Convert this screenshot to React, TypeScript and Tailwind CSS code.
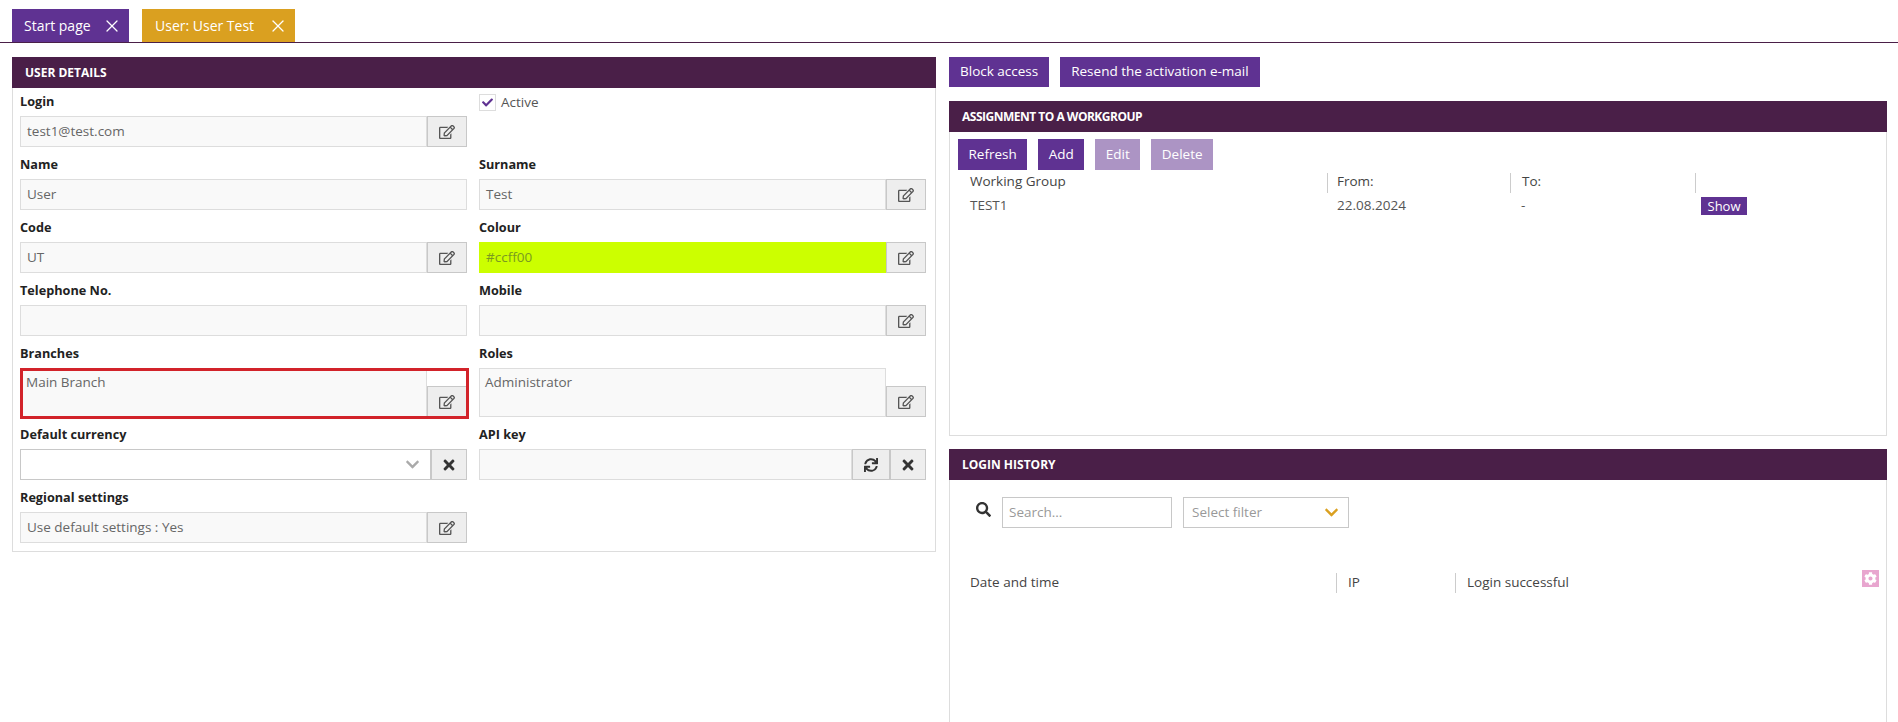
import { FaCheck, FaChevronDown, FaCog, FaRegEdit, FaSearch, FaSync, FaTimes } from "react-icons/fa";
import { X } from "lucide-react";
import type { ReactNode } from "react";

const iconButton =
  "flex shrink-0 items-center justify-center border border-[#c8c8c8] bg-[#eeeeee] text-[#555555]";
const readonlyInput = "flex min-w-0 flex-1 border border-[#dddddd] bg-[#f9f9f9] text-[#666666]";

const PanelHeader = ({ title, tight }: { title: string; tight?: boolean }) => (
  <div
    className={`flex h-[31px] items-center bg-[#4a1f48] pl-[13px] text-[12px] font-bold uppercase text-white ${
      tight ? "tracking-[-0.5px]" : ""
    }`}
  >
    {title}
  </div>
);

const EditButton = () => (
  <button className={`${iconButton} h-[31px] w-[40px]`}>
    <FaRegEdit size={16} />
  </button>
);

const Field = ({ label, children }: { label: string; children: ReactNode }) => (
  <div>
    <div className="flex h-[28px] items-center text-[12.7px] font-bold text-[#222222]">{label}</div>
    <div className="mb-[4px] flex">{children}</div>
  </div>
);

const TextField = ({ label, value, edit = true }: { label: string; value: string; edit?: boolean }) => (
  <Field label={label}>
    <div className={`${readonlyInput} h-[31px] items-center px-[6px] pb-[1px]`}>{value}</div>
    {edit && <EditButton />}
  </Field>
);

const ActionButton = ({
  children,
  disabled,
  size = "h-[31px] px-[10.5px]",
}: {
  children: ReactNode;
  disabled?: boolean;
  size?: string;
}) => (
  <button className={`${size} pb-[1px] text-white ${disabled ? "bg-[#ac94c4]" : "bg-[#5f3292]"}`}>
    {children}
  </button>
);

const ColumnHead = ({ className, children }: { className: string; children?: ReactNode }) => (
  <div className={`${className} h-[20px]`}>{children}</div>
);

const Tab = ({ label, className }: { label: string; className: string }) => (
  <div className={`flex h-[33px] items-center justify-between pr-[7px] text-[14px] text-white ${className}`}>
    <span>{label}</span>
    <X size={20} strokeWidth={1.5} />
  </div>
);

const ClearIcon = () => <FaTimes size={16} className="text-[#333333]" />;

export default function App() {
  return (
    <div className="h-[722px] overflow-hidden bg-white text-[13.5px] font-['Open_Sans',sans-serif] text-[#444444]">
      {/* Tabs */}
      <div className="flex h-[43px] gap-[13px] border-b border-[#4a1f48] pl-[12px] pt-[9px]">
        <Tab label="Start page" className="w-[117px] bg-[#5f3292] pl-[12px]" />
        <Tab label="User: User Test" className="w-[153px] bg-[#daa020] pl-[13px]" />
      </div>

      <div className="flex items-start pl-[12px] pr-[11px] pt-[14px]">
        {/* User details */}
        <div className="w-[924px] shrink-0">
          <PanelHeader title="User details" />
          <div className="border border-t-0 border-[#dddddd] pb-[4px] pl-[7px] pr-[9px]">
            <div className="grid grid-cols-2 gap-x-[12px]">
              <TextField label="Login" value="test1@test.com" />
              <div className="flex h-[28px] items-center gap-[5px] text-[#555555]">
                <span className="flex h-[17px] w-[17px] items-center justify-center border border-[#dddddd] text-[#5f3292]">
                  <FaCheck size={11} />
                </span>
                Active
              </div>
              <TextField label="Name" value="User" edit={false} />
              <TextField label="Surname" value="Test" />
              <TextField label="Code" value="UT" />
              <Field label="Colour">
                <div className="flex h-[31px] min-w-0 flex-1 items-center bg-[#ccff00] px-[7px] pb-[1px] text-[#7a9a20]">
                  #ccff00
                </div>
                <EditButton />
              </Field>
              <TextField label="Telephone No." value="" edit={false} />
              <TextField label="Mobile" value="" />
              <Field label="Branches">
                <div className="relative flex h-[49px] flex-1">
                  <div className={`${readonlyInput} px-[5px] pt-[3px]`}>Main Branch</div>
                  <div className="flex flex-col justify-end">
                    <EditButton />
                  </div>
                  {/* Red highlight drawn over the field */}
                  <div className="absolute -bottom-[2px] left-0 -right-[2px] top-0 border-[3px] border-[#d2232a]" />
                </div>
              </Field>
              <Field label="Roles">
                <div className={`${readonlyInput} h-[49px] px-[5px] pt-[3px]`}>Administrator</div>
                <div className="flex flex-col justify-end">
                  <EditButton />
                </div>
              </Field>
              <Field label="Default currency">
                <div className="flex h-[31px] flex-1 items-center justify-end border border-[#c8c8c8] pr-[10px] text-[#aaaaaa]">
                  <FaChevronDown size={15} />
                </div>
                <button className={`${iconButton} h-[31px] w-[36px]`}>
                  <ClearIcon />
                </button>
              </Field>
              <Field label="API key">
                <div className={`${readonlyInput} h-[31px]`} />
                <button className={`${iconButton} h-[31px] w-[38px]`}>
                  <FaSync size={14} className="text-[#333333]" />
                </button>
                <button className={`${iconButton} h-[31px] w-[36px]`}>
                  <ClearIcon />
                </button>
              </Field>
              <TextField label="Regional settings" value="Use default settings : Yes" />
            </div>
          </div>
        </div>

        {/* Right column */}
        <div className="ml-[13px] min-w-0 flex-1">
          <div className="flex gap-[11px]">
            <ActionButton size="h-[30px] px-[11px]">Block access</ActionButton>
            <ActionButton size="h-[30px] px-[11px]">Resend the activation e-mail</ActionButton>
          </div>

          <div className="mt-[14px]">
            <PanelHeader title="Assignment to a workgroup" tight />
            <div className="h-[304px] border border-t-0 border-[#dddddd] pl-[8px]">
              <div className="flex gap-[11px] pt-[7px]">
                <ActionButton>Refresh</ActionButton>
                <ActionButton>Add</ActionButton>
                <ActionButton disabled>Edit</ActionButton>
                <ActionButton disabled>Delete</ActionButton>
              </div>
              <div className="mt-[3px] flex pl-[12px] leading-[16px]">
                <ColumnHead className="w-[357px]">Working Group</ColumnHead>
                <ColumnHead className="w-[183px] border-l border-[#cccccc] pl-[9px]">From:</ColumnHead>
                <ColumnHead className="w-[185px] border-l border-[#cccccc] pl-[11px]">To:</ColumnHead>
                <ColumnHead className="w-[60px] border-l border-[#cccccc]" />
              </div>
              <div className="mt-[2px] flex h-[20px] items-center pl-[12px] text-[#555555]">
                <div className="w-[357px]">TEST1</div>
                <div className="w-[183px] pl-[10px]">22.08.2024</div>
                <div className="w-[185px] pl-[11px]">-</div>
                <button className="ml-[6px] mt-[2px] h-[18px] w-[46px] bg-[#5f3292] text-[13px] leading-[18px] text-white">
                  Show
                </button>
              </div>
            </div>
          </div>

          <div className="mt-[13px]">
            <PanelHeader title="Login history" />
            <div className="h-[260px] border border-t-0 border-[#dddddd]">
              <div className="flex items-start pl-[26px] pt-[17px]">
                <FaSearch size={15} className="mr-[11px] mt-[5px] text-[#333333]" />
                <div className="flex h-[31px] w-[170px] items-center border border-[#c8c8c8] pl-[6px] text-[#999999]">
                  Search...
                </div>
                <div className="ml-[11px] flex h-[31px] w-[166px] items-center justify-between border border-[#c8c8c8] pl-[8px] pr-[9px] text-[#999999]">
                  Select filter
                  <FaChevronDown size={15} className="text-[#daa020]" />
                </div>
              </div>
              <div className="relative mt-[45px] flex pl-[20px] leading-[18px]">
                <ColumnHead className="w-[366px]">Date and time</ColumnHead>
                <ColumnHead className="w-[119px] border-l border-[#cccccc] pl-[11px]">IP</ColumnHead>
                <ColumnHead className="w-[300px] border-l border-[#cccccc] pl-[11px]">Login successful</ColumnHead>
                <span className="absolute right-[7px] top-[-3px] flex h-[17px] w-[17px] items-center justify-center bg-[#e8a6cf] text-white">
                  <FaCog size={13} />
                </span>
              </div>
            </div>
          </div>
        </div>
      </div>
    </div>
  );
}
